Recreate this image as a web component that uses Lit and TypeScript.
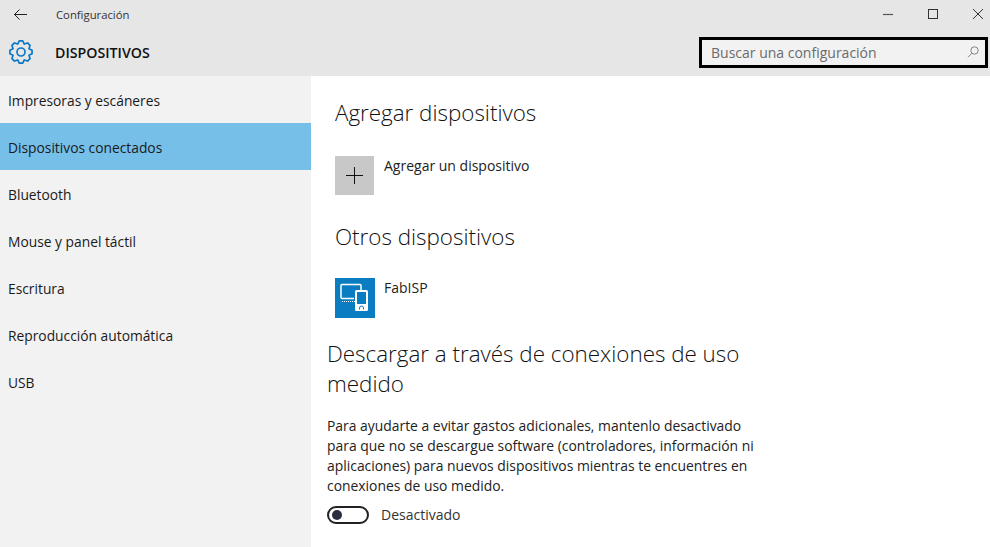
import { LitElement, html, css } from 'lit';
import { customElement } from 'lit/decorators.js';

const NAV = [
  'Impresoras y escáneres',
  'Dispositivos conectados',
  'Bluetooth',
  'Mouse y panel táctil',
  'Escritura',
  'Reproducción automática',
  'USB',
];

const gearPath = (() => {
  // 8 tooth outline gear, centred on 12,12
  const pts: string[] = [];
  const n = 8;
  for (let i = 0; i < n; i++) {
    const a = (i / n) * Math.PI * 2 - Math.PI / 2;
    const s = (Math.PI * 2) / n;
    const p = (r: number, t: number) =>
      `${(12 + r * Math.cos(a + t * s)).toFixed(2)} ${(12 + r * Math.sin(a + t * s)).toFixed(2)}`;
    pts.push(`${i ? 'L' : 'M'}${p(8.6, -0.5)}`, `L${p(11.2, -0.2)}`, `L${p(11.2, 0.2)}`, `L${p(8.6, 0.5)}`);
  }
  return pts.join(' ') + ' Z';
})();

@customElement('app-root')
export class AppRoot extends LitElement {
  static styles = css`
    :host {
      display: block;
      width: 990px;
      height: 547px;
      overflow: hidden;
      background: #fff;
      color: #111;
      font-family: 'Open Sans', 'Noto Sans', sans-serif;
    }
    .header {
      height: 76px;
      background: #e6e6e6;
      display: flex;
      flex-direction: column;
    }
    .titlebar {
      height: 28px;
      display: flex;
      align-items: center;
    }
    .back {
      width: 16px;
      margin-left: 13px;
      display: flex;
    }
    .app-title {
      margin-left: 27px;
      font-size: 11.3px;
      color: #333;
    }
    .win {
      margin-left: auto;
      display: flex;
      align-items: center;
      gap: 35px;
      padding-right: 7px;
    }
    .win svg {
      display: block;
    }
    .bar {
      flex: 1;
      display: flex;
      align-items: center;
      padding-left: 9px;
    }
    .section {
      margin-left: 22px;
      font-size: 14.2px;
      font-weight: 600;
      color: #111;
    }
    .search {
      box-sizing: border-box;
      margin-left: auto;
      margin-right: 2px;
      width: 289px;
      height: 31px;
      border: 3px solid #000;
      background: #f2f2f2;
      display: flex;
      align-items: center;
      justify-content: space-between;
      padding: 0 6px 0 9px;
      font-size: 14px;
      color: #6b6b6b;
    }
    .main {
      display: flex;
      height: 471px;
    }
    .nav {
      width: 311px;
      background: #f2f2f2;
      flex: none;
    }
    .nav div {
      height: 47px;
      line-height: 49px;
      padding-left: 8px;
      font-size: 13.8px;
      color: #1a1a1a;
    }
    .nav .on {
      background: #76bfe9;
    }
    .content {
      flex: 1;
      padding-left: 16px;
    }
    h2 {
      margin: 0;
      font-weight: 300;
      font-size: 22.4px;
      line-height: 28px;
      color: #111;
    }
    .indent {
      margin-left: 8px;
    }
    .first {
      padding-top: 23px;
    }
    .row {
      display: flex;
      margin-top: 29px;
      font-size: 14px;
    }
    .row span {
      margin-left: 9px;
      line-height: 20px;
      color: #222;
    }
    .tile {
      width: 40px;
      height: 40px;
      flex: none;
      display: flex;
      align-items: center;
      justify-content: center;
    }
    .plus {
      width: 39px;
      height: 39px;
      background: #c8c8c8;
      margin-right: 1px;
    }
    .blue {
      background: #0a7cc1;
    }
    .others {
      margin-top: 28px;
    }
    .row.fab {
      margin-top: 27px;
    }
    .metered {
      margin-top: 21px;
      width: 430px;
      line-height: 30px;
    }
    p {
      margin: 17px 0 0;
      width: 432px;
      font-size: 13.9px;
      line-height: 20px;
      color: #222;
    }
    .toggle-row {
      display: flex;
      align-items: center;
      margin-top: 9px;
      font-size: 14px;
      color: #333;
    }
    .toggle {
      width: 42px;
      height: 18px;
      border: 2px solid #222;
      border-radius: 10px;
      display: flex;
      align-items: center;
      padding-left: 3px;
      box-sizing: border-box;
      margin-right: 12px;
    }
    .toggle i {
      width: 10px;
      height: 10px;
      border-radius: 50%;
      background: #2b2d42;
    }
  `;

  render() {
    return html`
      <div class="header">
        <div class="titlebar">
          <div class="back">
            <svg width="16" height="13" viewBox="0 0 16 13" fill="none" stroke="#222" stroke-width="1">
              <path d="M1.5 6.5H14M6.5 1.5l-5 5 5 5" />
            </svg>
          </div>
          <div class="app-title">Configuración</div>
          <div class="win">
            <svg width="10" height="12" viewBox="0 0 10 12"><path d="M0 6.5H10" stroke="#555" stroke-width="1.2" /></svg>
            <svg width="10" height="10" viewBox="0 0 10 10" fill="none"><rect x=".5" y=".5" width="9" height="9" stroke="#333" /></svg>
            <svg width="10" height="10" viewBox="0 0 10 10" fill="none"><path d="M0 0L10 10M10 0L0 10" stroke="#333" /></svg>
          </div>
        </div>
        <div class="bar">
          <svg width="24" height="24" viewBox="0 0 24 24" fill="none" stroke="#0a78c8" stroke-width="1.7" stroke-linejoin="round">
            <path d=${gearPath} />
            <circle cx="12" cy="12" r="4" />
          </svg>
          <div class="section">DISPOSITIVOS</div>
          <div class="search">
            <span>Buscar una configuración</span>
            <svg width="12" height="12" viewBox="0 0 12 12" fill="none" stroke="#777" stroke-width=".9">
              <circle cx="7.5" cy="4.5" r="3.7" />
              <path d="M5 7.2L1 11.2" />
            </svg>
          </div>
        </div>
      </div>
      <div class="main">
        <div class="nav">
          ${NAV.map((n, i) => html`<div class=${i === 1 ? 'on' : ''}>${n}</div>`)}
        </div>
        <div class="content">
          <div class="indent first">
            <h2>Agregar dispositivos</h2>
            <div class="row">
              <div class="tile plus">
                <svg width="17" height="17" viewBox="0 0 17 17"><path d="M8.5 0V17M0 8.5H17" stroke="#111" stroke-width="1" /></svg>
              </div>
              <span>Agregar un dispositivo</span>
            </div>
            <h2 class="others">Otros dispositivos</h2>
            <div class="row fab">
              <div class="tile blue">
                <svg width="40" height="40" viewBox="0 0 40 40" fill="none">
                  <path d="M19 20.5H7a1 1 0 0 1-1-1V7.5a1 1 0 0 1 1-1H25a1 1 0 0 1 1 1V12" stroke="#fff" stroke-width="1.5" />
                  <path d="M7 23.5H20" stroke="#fff" stroke-dasharray="1 1" />
                  <rect x="20" y="12" width="13" height="21" rx="1.5" fill="#fff" />
                  <rect x="22" y="14" width="9" height="12" fill="#0a7cc1" />
                  <path d="M24.5 31.5v-1.5a2 2 0 0 1 4 0v1.5" stroke="#0a7cc1" />
                </svg>
              </div>
              <span>FabISP</span>
            </div>
          </div>
          <h2 class="metered">Descargar a través de conexiones de uso medido</h2>
          <p>
            Para ayudarte a evitar gastos adicionales, mantenlo desactivado para que no se descargue software
            (controladores, información ni aplicaciones) para nuevos dispositivos mientras te encuentres en conexiones
            de uso medido.
          </p>
          <div class="toggle-row">
            <div class="toggle"><i></i></div>
            Desactivado
          </div>
        </div>
      </div>
    `;
  }
}
